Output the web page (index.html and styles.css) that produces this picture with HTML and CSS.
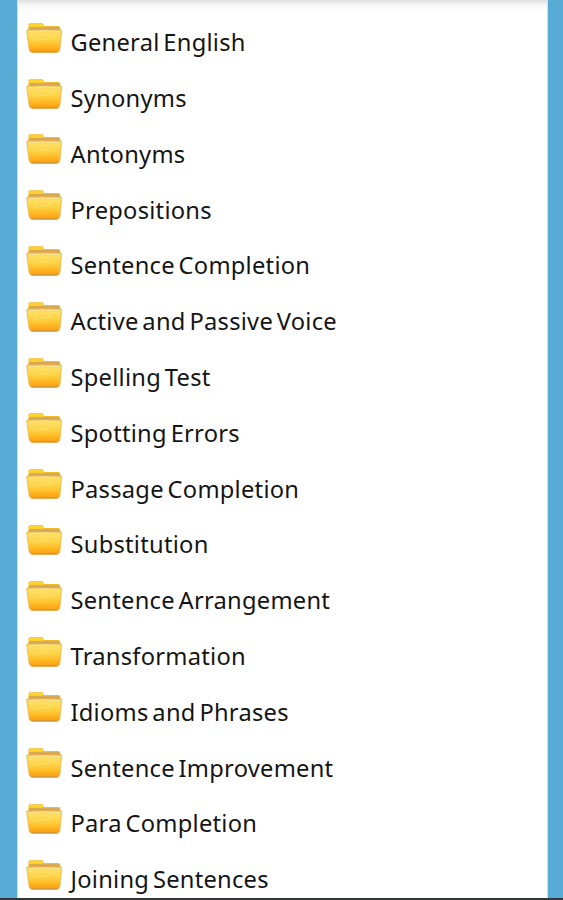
FILE: index.html
```
<!DOCTYPE html>
<html lang="en">
<head>
    <meta charset="UTF-8">
    <meta name="viewport" content="width=device-width, initial-scale=1.0">
    <title>General English</title>
    <link rel="stylesheet" href="styles.css">
</head>
<body>

<svg class="defs" width="0" height="0">
    <defs>
        <linearGradient id="front" x1="0" y1="0" x2="0" y2="1">
            <stop offset="0" stop-color="#f0c050"/>
            <stop offset="0.15" stop-color="#ffde62"/>
            <stop offset="0.4" stop-color="#fdd54b"/>
            <stop offset="0.65" stop-color="#ffc12c"/>
            <stop offset="0.9" stop-color="#fda514"/>
            <stop offset="1" stop-color="#e8a02c"/>
        </linearGradient>
        <symbol id="folder" viewBox="0 0 38 32">
            <path d="M2.500 10V2.600Q2.500.8 4.300.8H16q1.800 0 2 1.500l.2 1.400H33q2.300 0 2.300 2.300v4z" fill="#f2bd2b"/>
            <path d="M3.500 3Q3.500 1.500 5 1.500h10.800q1.200 0 1.400 1.500l.2 1.500H3.500z" fill="#ffd52c"/>
            <path d="M3.600 5h31v4h-31z" fill="#cfa564"/>
            <path d="M2 7.500h33.500q1.200 0 1 2l-1.500 16.500q-.4 4.800-3.500 4.800H6.500q-3.100 0-3.500-4.800L.8 9.500q-.2-2 1.200-2z" fill="url(#front)" stroke="#e9b04c" stroke-width=".8"/>
            <path d="M2.500 9.500q16-1.500 33 0" fill="none" stroke="#ffec9a" stroke-width="1"/>
            <path d="M8 19l6-2.500 5 1.200 7-3" fill="none" stroke="#ffe98a" stroke-width="1" opacity=".6"/>
            <path d="M6.500 30.200h25" stroke="#cf9440" stroke-width="1"/>
        </symbol>
    </defs>
</svg>

<ul class="list">
    <li class="item"><svg class="icon"><use href="#folder"/></svg><span>General English</span></li>
    <li class="item"><svg class="icon"><use href="#folder"/></svg><span>Synonyms</span></li>
    <li class="item"><svg class="icon"><use href="#folder"/></svg><span>Antonyms</span></li>
    <li class="item"><svg class="icon"><use href="#folder"/></svg><span>Prepositions</span></li>
    <li class="item"><svg class="icon"><use href="#folder"/></svg><span>Sentence Completion</span></li>
    <li class="item"><svg class="icon"><use href="#folder"/></svg><span>Active and Passive Voice</span></li>
    <li class="item"><svg class="icon"><use href="#folder"/></svg><span>Spelling Test</span></li>
    <li class="item"><svg class="icon"><use href="#folder"/></svg><span>Spotting Errors</span></li>
    <li class="item"><svg class="icon"><use href="#folder"/></svg><span>Passage Completion</span></li>
    <li class="item"><svg class="icon"><use href="#folder"/></svg><span>Substitution</span></li>
    <li class="item"><svg class="icon"><use href="#folder"/></svg><span>Sentence Arrangement</span></li>
    <li class="item"><svg class="icon"><use href="#folder"/></svg><span>Transformation</span></li>
    <li class="item"><svg class="icon"><use href="#folder"/></svg><span>Idioms and Phrases</span></li>
    <li class="item"><svg class="icon"><use href="#folder"/></svg><span>Sentence Improvement</span></li>
    <li class="item"><svg class="icon"><use href="#folder"/></svg><span>Para Completion</span></li>
    <li class="item"><svg class="icon"><use href="#folder"/></svg><span>Joining Sentences</span></li>
</ul>

</body>
</html>
```
FILE: styles.css
```
body {
    margin: 0;
    height: 900px;
    box-sizing: border-box;
    padding: 0 15px 0 17px;
    overflow: hidden;
    background-color: #57aad3;
    border-bottom: 2px solid #30363a;
    font-family: "Noto Sans", sans-serif;
}
.defs {
    display: block;
}
.list {
    list-style: none;
    margin: 0;
    height: 898px;
    box-sizing: border-box;
    padding: 14.4px 0 0 8px;
    overflow: hidden;
    background: linear-gradient(#dedede, #f6f6f6 5px, #fff 12px);
    border-left: 1px solid #c5e4f3;
    border-right: 1px solid #c5e4f3;
}
.item {
    display: flex;
    align-items: center;
    height: 55.8px;
    font-size: 23.7px;
    line-height: 32px;
    letter-spacing: 0.25px;
    word-spacing: -2.6px;
    color: #151515;
    white-space: nowrap;
}
.icon {
    width: 37px;
    height: 32px;
    margin: 0 7.5px 9px 0;
    flex-shrink: 0;
}
```
